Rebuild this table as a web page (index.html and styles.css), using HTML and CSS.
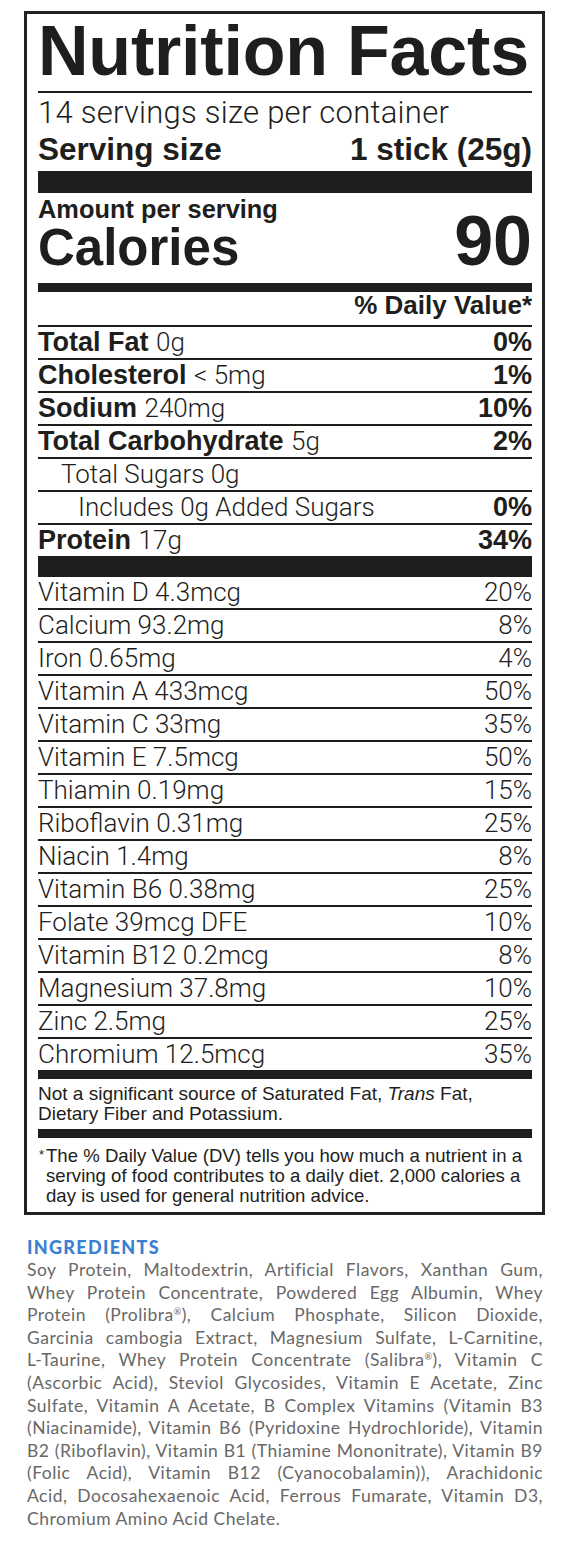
FILE: index.html
```html
<!DOCTYPE html>
<html lang="en">
<head>
<meta charset="utf-8">
<title>Nutrition Facts</title>
<link rel="stylesheet" href="styles.css">
</head>
<body>
<main class="page">
  <section class="label">
    <h1 class="title">Nutrition Facts</h1>
    <div class="servings">14 servings size per container</div>
    <div class="serving-size"><span>Serving size</span><span>1 stick (25g)</span></div>
    <div class="bar bar-thick"></div>
    <div class="calories">
      <div class="amount">Amount per serving</div>
      <div class="cal-row"><span class="cal-label">Calories</span><span class="cal-value">90</span></div>
    </div>
    <div class="bar bar-medium"></div>
    <div class="dv-head">% Daily Value*</div>
    <ul class="rows">
      <li class="row"><span><b>Total Fat</b> <span class="lt">0g</span></span><b>0%</b></li>
      <li class="row"><span><b>Cholesterol</b> <span class="lt">&lt; 5mg</span></span><b>1%</b></li>
      <li class="row"><span><b>Sodium</b> <span class="lt">240mg</span></span><b>10%</b></li>
      <li class="row"><span><b>Total Carbohydrate</b> <span class="lt">5g</span></span><b>2%</b></li>
      <li class="row indent1"><span class="lt">Total Sugars 0g</span></li>
      <li class="row indent2"><span class="lt">Includes 0g Added Sugars</span><b>0%</b></li>
      <li class="row"><span><b>Protein</b> <span class="lt">17g</span></span><b>34%</b></li>
    </ul>
    <div class="bar bar-protein"></div>
    <ul class="rows vit">
      <li class="row"><span>Vitamin D 4.3mcg</span><span>20%</span></li>
      <li class="row"><span>Calcium 93.2mg</span><span>8%</span></li>
      <li class="row"><span>Iron 0.65mg</span><span>4%</span></li>
      <li class="row"><span>Vitamin A 433mcg</span><span>50%</span></li>
      <li class="row"><span>Vitamin C 33mg</span><span>35%</span></li>
      <li class="row"><span>Vitamin E 7.5mcg</span><span>50%</span></li>
      <li class="row"><span>Thiamin 0.19mg</span><span>15%</span></li>
      <li class="row"><span>Riboflavin 0.31mg</span><span>25%</span></li>
      <li class="row"><span>Niacin 1.4mg</span><span>8%</span></li>
      <li class="row"><span>Vitamin B6 0.38mg</span><span>25%</span></li>
      <li class="row"><span>Folate 39mcg DFE</span><span>10%</span></li>
      <li class="row"><span>Vitamin B12 0.2mcg</span><span>8%</span></li>
      <li class="row"><span>Magnesium 37.8mg</span><span>10%</span></li>
      <li class="row"><span>Zinc 2.5mg</span><span>25%</span></li>
      <li class="row"><span>Chromium 12.5mcg</span><span>35%</span></li>
    </ul>
    <div class="bar bar-medium"></div>
    <p class="note">Not a significant source of Saturated Fat, <i>Trans</i> Fat,<br>Dietary Fiber and Potassium.</p>
    <div class="bar bar-medium"></div>
    <p class="footnote"><span class="star">*</span>The % Daily Value (DV) tells you how much a nutrient in a<br>serving of food contributes to a daily diet. 2,000 calories a<br>day is used for general nutrition advice.</p>
  </section>

  <section class="ingredients">
    <h2 class="ing-title">INGREDIENTS</h2>
    <p class="ing-text">
      <span class="ln">Soy Protein, Maltodextrin, Artificial Flavors, Xanthan Gum,</span>
      <span class="ln">Whey Protein Concentrate, Powdered Egg Albumin, Whey</span>
      <span class="ln">Protein (Prolibra<sup>®</sup>), Calcium Phosphate, Silicon Dioxide,</span>
      <span class="ln">Garcinia cambogia Extract, Magnesium Sulfate, L-Carnitine,</span>
      <span class="ln">L-Taurine, Whey Protein Concentrate (Salibra<sup>®</sup>), Vitamin C</span>
      <span class="ln">(Ascorbic Acid), Steviol Glycosides, Vitamin E Acetate, Zinc</span>
      <span class="ln">Sulfate, Vitamin A Acetate, B Complex Vitamins (Vitamin B3</span>
      <span class="ln">(Niacinamide), Vitamin B6 (Pyridoxine Hydrochloride), Vitamin</span>
      <span class="ln">B2 (Riboflavin), Vitamin B1 (Thiamine Mononitrate), Vitamin B9</span>
      <span class="ln">(Folic Acid), Vitamin B12 (Cyanocobalamin)), Arachidonic</span>
      <span class="ln">Acid, Docosahexaenoic Acid, Ferrous Fumarate, Vitamin D3,</span>
      <span class="ln last">Chromium Amino Acid Chelate.</span>
    </p>
  </section>
</main>
</body>
</html>
```

FILE: styles.css
```css
* { box-sizing: border-box; margin: 0; padding: 0; }

body {
  background: #ffffff;
  color: #1e1e1c;
  font-family: "Liberation Sans", Arial, sans-serif;
}

.page { padding-top: 11px; }

.label {
  margin-left: 24px;
  width: 521px;
  border: 3px solid #222222;
  padding: 0 10px 0 11px;
}

.title {
  font-size: 70px;
  font-weight: 700;
  line-height: 72px;
  padding: 1px 0 4px;
  letter-spacing: -0.2px;
  border-bottom: 2px solid #1e1e1c;
  white-space: nowrap;
}

.lt {
  font-family: Roboto, "Liberation Sans", sans-serif;
  font-weight: 300;
}

.servings {
  font-family: Roboto, "Liberation Sans", sans-serif;
  font-weight: 300;
  font-size: 31px;
  letter-spacing: 0.25px;
  line-height: 36px;
  padding-top: 2px;
}

.serving-size {
  display: flex;
  justify-content: space-between;
  font-size: 31.5px;
  font-weight: 700;
  line-height: 36px;
}

.bar { background: #1e1e1c; }
.bar-thick { height: 22px; margin-top: 4px; }
.bar-medium { height: 9px; }
.bar-protein { height: 21px; }

.calories { padding-top: 4px; }

.amount {
  font-size: 25.4px;
  font-weight: 700;
  line-height: 25px;
}

.cal-row {
  display: flex;
  justify-content: space-between;
  align-items: baseline;
  height: 61px;
  font-weight: 700;
}

.cal-label { font-size: 51px; line-height: 38px; }
.cal-value { font-size: 70px; line-height: 38px; }

.dv-head {
  text-align: right;
  font-size: 26px;
  font-weight: 700;
  line-height: 27px;
  padding-bottom: 6px;
  border-bottom: 2px solid #1e1e1c;
}

.rows { list-style: none; }

.row {
  display: flex;
  justify-content: space-between;
  align-items: baseline;
  height: 33px;
  line-height: 31px;
  font-size: 27px;
}

.row + .row { border-top: 2px solid #1e1e1c; }
.row:first-child { height: 31px; }

.indent1 { padding-left: 23px; }
.indent2 { padding-left: 40px; }

.rows .lt { font-size: 26px; }

.vit .row {
  font-family: Roboto, "Liberation Sans", sans-serif;
  font-weight: 300;
  font-size: 26px;
}

.note {
  font-size: 19px;
  line-height: 20px;
  padding: 5px 0 5px;
  white-space: nowrap;
}

.footnote {
  font-size: 18.6px;
  line-height: 20px;
  padding: 8px 0 6px 8px;
  white-space: nowrap;
}

.star {
  display: inline-block;
  width: 0;
  margin-left: -7px;
  margin-right: 7px;
  vertical-align: top;
  font-size: 13px;
  line-height: 17px;
}

.ingredients {
  padding: 22px 27px 0 27px;
}

.ing-title {
  font-family: Lato, "Liberation Sans", sans-serif;
  font-weight: 900;
  font-size: 18px;
  letter-spacing: 1.3px;
  line-height: 20px;
  margin-bottom: 2px;
  color: #3a80d2;
}

.ing-text {
  font-family: Lato, "Liberation Sans", sans-serif;
  font-size: 17.5px;
  letter-spacing: 0.5px;
  line-height: 22.6px;
  color: #686868;
}

.ln {
  display: block;
  white-space: nowrap;
  text-align: justify;
  text-align-last: justify;
}

.ln.last { text-align-last: left; }

.ing-text sup {
  font-size: 9px;
  vertical-align: 6px;
  line-height: 0;
}
```
